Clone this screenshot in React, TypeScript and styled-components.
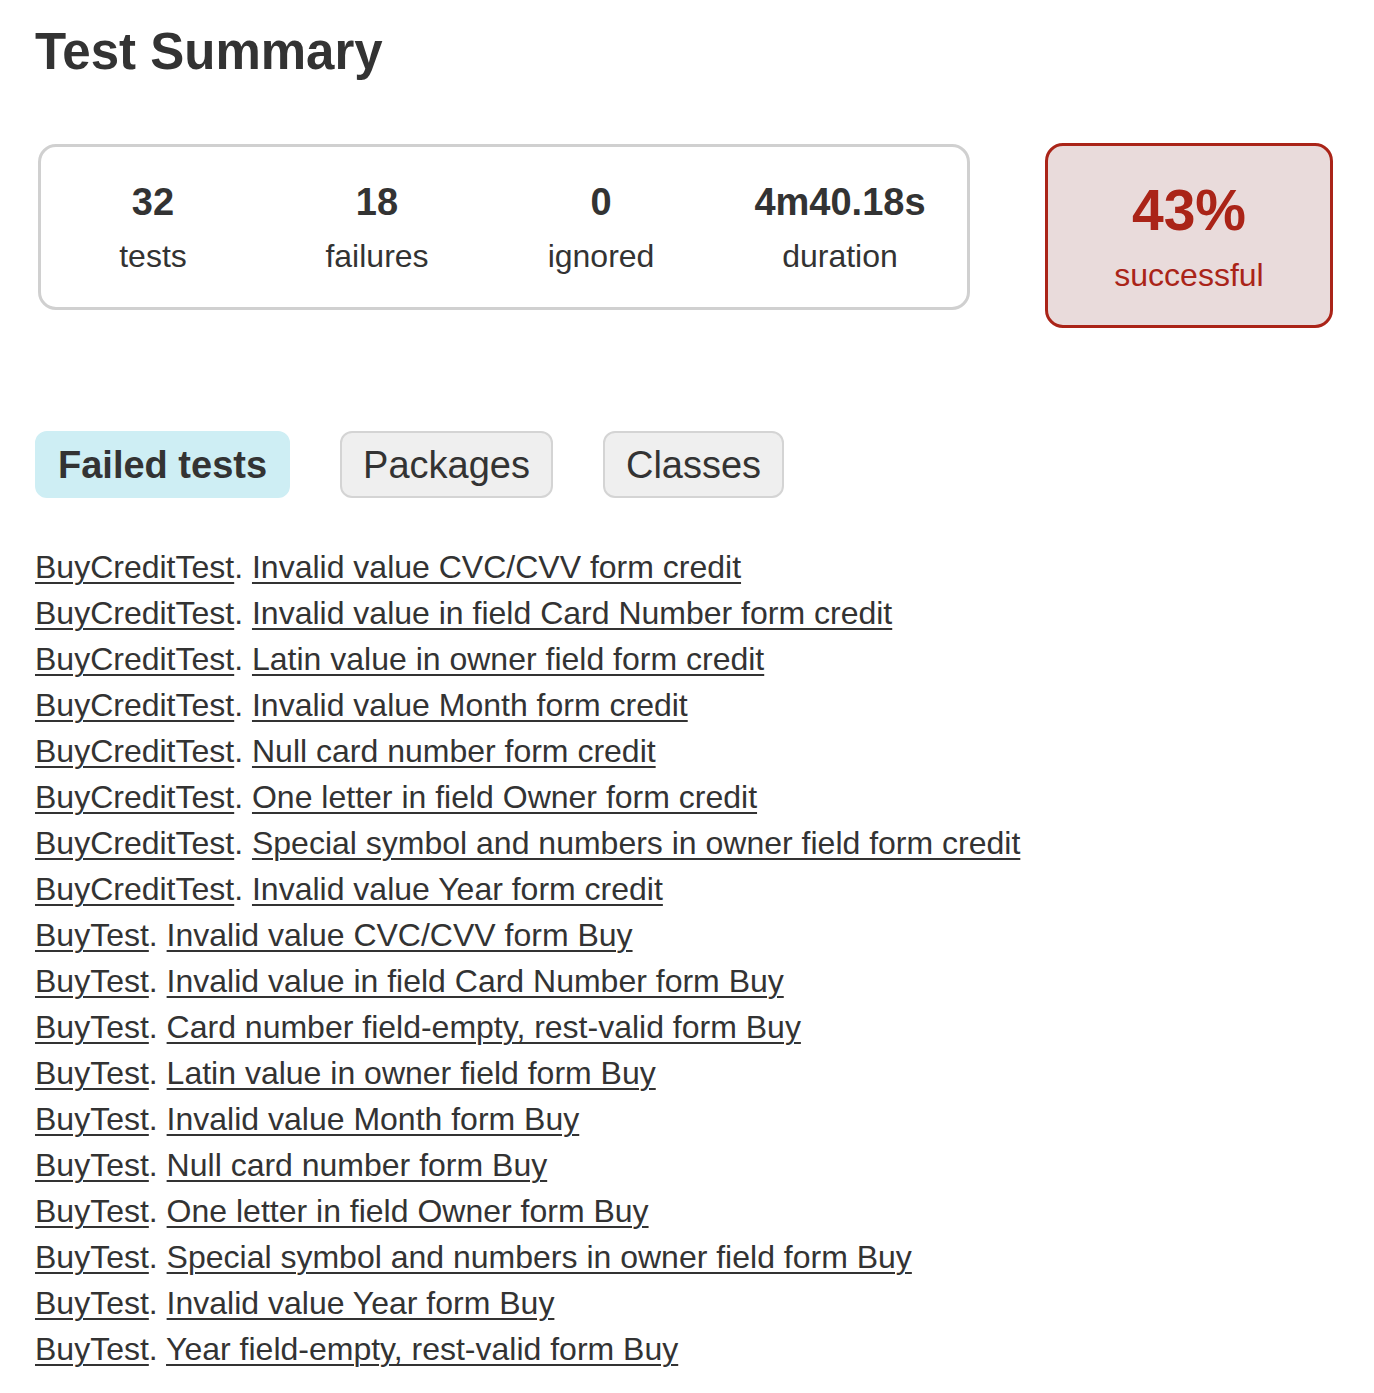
import styled, { createGlobalStyle } from "styled-components"

const GlobalStyle = createGlobalStyle`
    body {
        margin: 0;
        background: #ffffff;
        color: #333333;
        font-family: "Liberation Sans", Arial, Helvetica, sans-serif;
    }
`

const counters = [
    { value: "32", label: "tests" },
    { value: "18", label: "failures" },
    { value: "0", label: "ignored" },
    { value: "4m40.18s", label: "duration" },
]

const tabs = [
    { name: "Failed tests", selected: true },
    { name: "Packages", selected: false },
    { name: "Classes", selected: false },
]

const failed = [
    ["BuyCreditTest", "Invalid value CVC/CVV form credit"],
    ["BuyCreditTest", "Invalid value in field Card Number form credit"],
    ["BuyCreditTest", "Latin value in owner field form credit"],
    ["BuyCreditTest", "Invalid value Month form credit"],
    ["BuyCreditTest", "Null card number form credit"],
    ["BuyCreditTest", "One letter in field Owner form credit"],
    ["BuyCreditTest", "Special symbol and numbers in owner field form credit"],
    ["BuyCreditTest", "Invalid value Year form credit"],
    ["BuyTest", "Invalid value CVC/CVV form Buy"],
    ["BuyTest", "Invalid value in field Card Number form Buy"],
    ["BuyTest", "Card number field-empty, rest-valid form Buy"],
    ["BuyTest", "Latin value in owner field form Buy"],
    ["BuyTest", "Invalid value Month form Buy"],
    ["BuyTest", "Null card number form Buy"],
    ["BuyTest", "One letter in field Owner form Buy"],
    ["BuyTest", "Special symbol and numbers in owner field form Buy"],
    ["BuyTest", "Invalid value Year form Buy"],
    ["BuyTest", "Year field-empty, rest-valid form Buy"],
]

export default function App() {
    return (
        <>
            <GlobalStyle />
            <Page>
                <Title>Test Summary</Title>
                <SummaryRow>
                    <SummaryGroup>
                        {counters.map(c => (
                            <Counter key={c.label}>
                                <CounterValue>{c.value}</CounterValue>
                                <CounterLabel>{c.label}</CounterLabel>
                            </Counter>
                        ))}
                    </SummaryGroup>
                    <SuccessRate>
                        <RateValue>43%</RateValue>
                        <RateLabel>successful</RateLabel>
                    </SuccessRate>
                </SummaryRow>
                <TabLinks>
                    {tabs.map(t => (
                        <Tab key={t.name} $selected={t.selected}>{t.name}</Tab>
                    ))}
                </TabLinks>
                <LinkList>
                    {failed.map(([cls, test], i) => (
                        <li key={i}>
                            <a href="#">{cls}</a>. <a href="#">{test}</a>
                        </li>
                    ))}
                </LinkList>
            </Page>
        </>
    )
}

const Page = styled.div`
    padding: 22px 35px 20px 35px;
`

const Title = styled.h1`
    margin: 0;
    font-size: 51px;
    line-height: 60px;
    font-weight: bold;
    color: #333333;
`

const SummaryRow = styled.div`
    display: flex;
    align-items: flex-start;
    gap: 75px;
    margin-top: 61px;
    padding-left: 3px;
`

const SummaryGroup = styled.div`
    display: grid;
    grid-template-columns: 224px 224px 224px 254px;
    padding: 32px 0 31px 0;
    width: 926px;
    border: 3px solid #d0d0d0;
    border-radius: 18px;
    box-sizing: content-box;
    margin-top: 1px;
`

const Counter = styled.div`
    display: flex;
    flex-direction: column;
    align-items: center;
    gap: 11px;
`

const CounterValue = styled.div`
    font-size: 38px;
    line-height: 46px;
    font-weight: bold;
`

const CounterLabel = styled.div`
    font-size: 32px;
    line-height: 40px;
`

const SuccessRate = styled.div`
    width: 282px;
    padding: 31px 0 30px 0;
    border: 3px solid #aa2418;
    border-radius: 18px;
    background: #e9dbdb;
    color: #aa2418;
    display: flex;
    flex-direction: column;
    align-items: center;
    gap: 12px;
`

const RateValue = styled.div`
    font-size: 57px;
    line-height: 66px;
    font-weight: bold;
`

const RateLabel = styled.div`
    font-size: 32px;
    line-height: 40px;
`

const TabLinks = styled.ul`
    list-style: none;
    margin: 103px 0 0 0;
    padding: 0;
    display: flex;
    gap: 50px;
`

const Tab = styled.li<{ $selected?: boolean }>`
    font-size: 38px;
    line-height: 45px;
    padding: 10px 21px 8px 21px;
    border: 2px solid ${p => (p.$selected ? "#ceeef4" : "#d4d4d4")};
    background: ${p => (p.$selected ? "#ceeef4" : "#efefef")};
    font-weight: ${p => (p.$selected ? "bold" : "normal")};
    border-radius: 12px;
    color: #333333;
`

const LinkList = styled.ul`
    list-style: none;
    margin: 46px 0 0 0;
    padding: 0;

    & > li {
        font-size: 32px;
        line-height: 46px;
        white-space: nowrap;

        & > a {
            color: #333333;
            text-decoration: underline;
            text-decoration-thickness: 2px;
            text-underline-offset: 4px;
        }
    }
`
